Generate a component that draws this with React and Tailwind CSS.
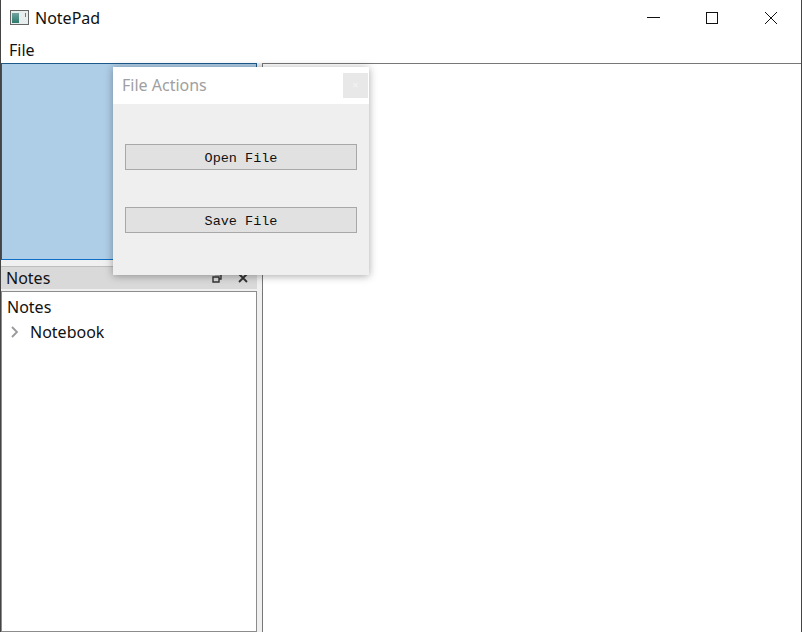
export default function App() {
  const ui = "font-['Noto_Sans',sans-serif]";
  return (
    <div className={`relative w-[802px] h-[632px] overflow-hidden bg-white flex flex-col border-x border-[#444] text-[#111] ${ui}`}>
      <div className="h-8 shrink-0 flex items-center">
        <svg width="20" height="16" viewBox="0 0 20 16" className="ml-[9px] mt-[3px]">
          <rect x="0.5" y="0.5" width="18" height="14" fill="#e8eeee" stroke="#666" />
          <defs>
            <linearGradient id="g" x1="0" y1="0" x2="0" y2="1">
              <stop offset="0" stopColor="#6fa3a0" />
              <stop offset="1" stopColor="#2f7a6d" />
            </linearGradient>
          </defs>
          <rect x="2" y="3" width="7" height="10" fill="url(#g)" />
          <rect x="15" y="3" width="1" height="4" fill="#777" />
        </svg>
        <span className="ml-[5px] text-[16px] leading-none mt-[3px]">NotePad</span>
        <div className="ml-auto flex items-center mt-[4px]">
          <svg width="14" height="14" viewBox="0 0 14 14" className="mr-[44px]">
            <path d="M0 6.5H13" stroke="#111" strokeWidth="1" />
          </svg>
          <svg width="14" height="14" viewBox="0 0 14 14" className="mr-[45px]">
            <rect x="1.5" y="1.5" width="11" height="11" fill="none" stroke="#111" />
          </svg>
          <svg width="14" height="14" viewBox="0 0 14 14" className="mr-[23px]">
            <path d="M1 1L13 13M13 1L1 13" stroke="#111" strokeWidth="1" />
          </svg>
        </div>
      </div>
      <div className="h-[31px] shrink-0 flex items-center pl-2 pt-[4px] text-[16px]">File</div>
      <div className="flex-1 flex min-h-0 bg-[#f0f0f0]">
        <div className="w-[256px] shrink-0 flex flex-col">
          <div className="h-[197px] shrink-0 bg-[#aecde6] border border-[#1d5a8c] border-b-[#0f6fc6]" />
          <div className="h-[6px] shrink-0" />
          <div className="h-[23px] shrink-0 bg-[#d9d9d9] border-t border-[#bdbdbd] flex items-center pl-[5px] text-[16px]">
            <span>Notes</span>
            <svg width="10" height="10" viewBox="0 0 10 10" className="ml-auto mr-[16px]">
              <path d="M3 1.5H9V6H7M1 4H7V9H1Z" fill="none" stroke="#333" strokeWidth="1.4" />
            </svg>
            <svg width="10" height="10" viewBox="0 0 10 10" className="mr-[9px]">
              <path d="M1 1L9 9M9 1L1 9" stroke="#333" strokeWidth="1.8" />
            </svg>
          </div>
          <div className="flex-1 bg-white border border-[#8c8c8c] mt-[2px] pt-[3px] text-[16px]">
            <div className="pl-[5px] h-[24px] leading-[25px]">Notes</div>
            <div className="h-[25px] flex items-center">
              <svg width="10" height="12" viewBox="0 0 10 12" className="ml-[8px]">
                <path d="M2 1L7 6L2 11" fill="none" stroke="#999" strokeWidth="1.8" />
              </svg>
              <span className="ml-[10px]">Notebook</span>
            </div>
          </div>
        </div>
        <div className="w-[5px] shrink-0" />
        <div className="flex-1 bg-white border-t border-l border-[#777]" />
      </div>
      <div className="absolute left-[112px] top-[67px] w-[256px] h-[208px] bg-[#efefef] shadow-[0_1px_8px_rgba(0,0,0,0.35)] flex flex-col">
        <div className="h-[37px] shrink-0 bg-white flex items-center pl-[9px] text-[16px] text-[#a0a0a0]">
          <span className="mt-[-2px]">File Actions</span>
          <div className="ml-auto mr-px w-[25px] h-[25px] bg-[#e8e8e8] flex items-center justify-center text-[11px] text-[#f4f4f4]">×</div>
        </div>
        <div className="flex-1 flex flex-col items-center pt-10 gap-[37px] font-['Liberation_Mono',monospace] text-[13.5px] text-[#111]">
          <div className="w-[232px] h-[26px] bg-[#e1e1e1] border border-[#a8a8a8] flex items-center justify-center pt-[5px]">Open File</div>
          <div className="w-[232px] h-[26px] bg-[#e1e1e1] border border-[#a8a8a8] flex items-center justify-center pt-[5px]">Save File</div>
        </div>
      </div>
    </div>
  );
}
